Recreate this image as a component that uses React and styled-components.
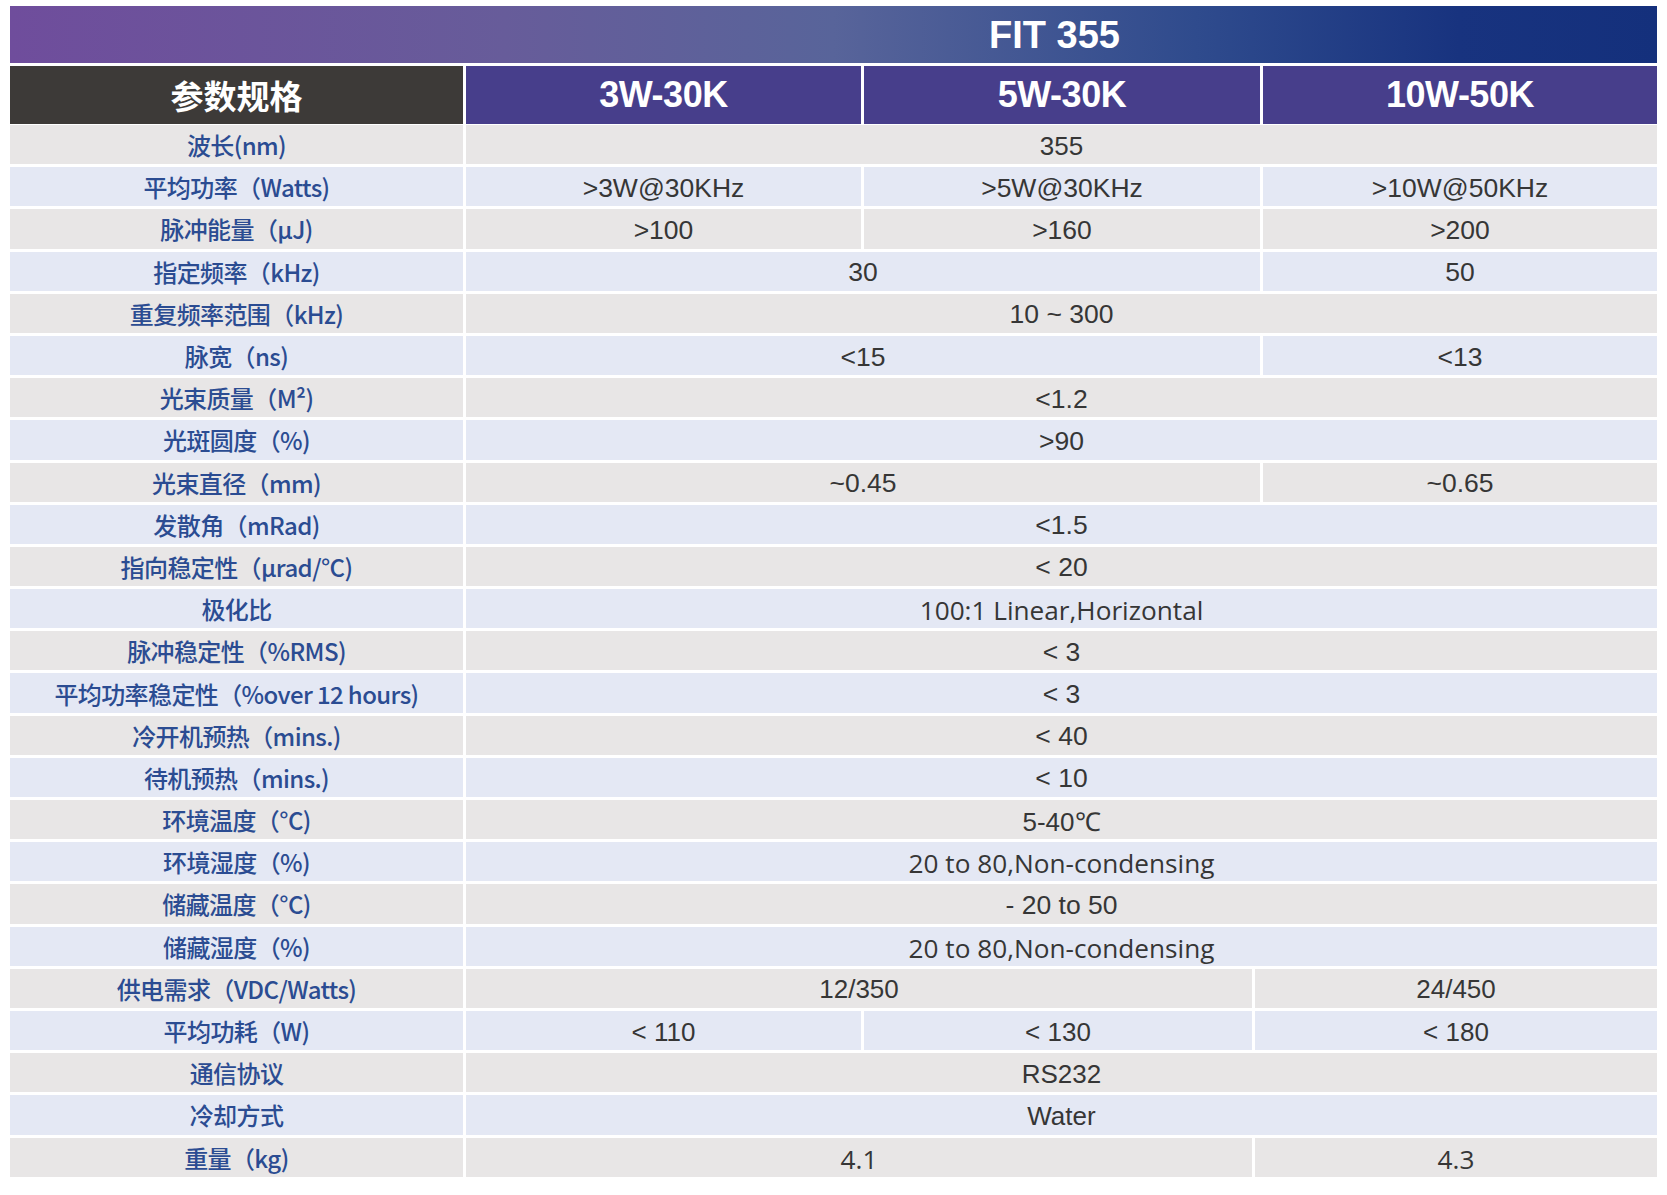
import React from 'react'
import styled, { createGlobalStyle, css } from 'styled-components'

const GlobalStyle = createGlobalStyle`
    html, body {
        margin: 0;
        padding: 0;
        background: #ffffff;
    }
`

const COLS = '453px 395px 396px 394px'
const COLS_SHIFTED = '453px 395px 388px 402px'

const fonts = {
    arial: css`
        font-family: "Liberation Sans", Arial, sans-serif;
        font-size: 26.5px;
    `,
    narrow: css`
        font-family: "Liberation Sans Narrow", "Liberation Sans", Arial, sans-serif;
        font-size: 26px;
    `,
    open: css`
        font-family: "Open Sans", "Noto Sans", sans-serif;
        font-size: 26.2px;
    `,
}

const Page = styled.div`
    padding: 6px 10px 16px 10px;
`

const Table = styled.div`
    width: 1647px;
    display: flex;
    flex-direction: column;
    gap: 3px;
`

const TitleBar = styled.div`
    height: 57px;
    display: grid;
    grid-template-columns: ${COLS};
    column-gap: 3px;
    background: linear-gradient(90deg, #6f4d9c 0%, #675c9a 30%, #58649a 50%, #2f4b8d 72%, #18337f 88%, #14307c 100%);
`

const Title = styled.div`
    grid-column: 2 / -1;
    display: flex;
    align-items: center;
    justify-content: center;
    padding-right: 14px;
    padding-top: 2px;
    color: #ffffff;
    font-family: "Liberation Sans Narrow", "Liberation Sans", Arial, sans-serif;
    font-weight: 700;
    font-size: 38px;
`

const HeaderRow = styled.div`
    display: grid;
    grid-template-columns: ${COLS};
    column-gap: 3px;
    height: 58px;
    margin-bottom: -2px;
`

const HeadCell = styled.div`
    display: flex;
    align-items: center;
    justify-content: center;
    color: #ffffff;
    font-weight: 700;
    background: ${p => (p.$dark ? '#3d3a38' : '#473e8b')};
    font-family: ${p => (p.$dark
        ? '"Noto Sans CJK SC", sans-serif'
        : '"Liberation Sans Narrow", "Liberation Sans", Arial, sans-serif')};
    font-size: ${p => (p.$dark ? '33px' : '36px')};
    letter-spacing: ${p => (p.$dark ? '0' : '-0.5px')};
`

const Row = styled.div`
    display: grid;
    grid-template-columns: ${p => (p.$shifted ? COLS_SHIFTED : COLS)};
    column-gap: 3px;
    height: 39.2px;
`

const Cell = styled.div`
    display: flex;
    align-items: center;
    justify-content: center;
    background: ${p => (p.$alt ? '#e4e8f4' : '#e8e6e6')};
    white-space: nowrap;
`

const Label = styled(Cell)`
    color: #2b4c92;
    font-family: "Noto Sans CJK SC", "Open Sans", sans-serif;
    font-size: 24px;
    font-weight: 500;
    letter-spacing: -0.6px;
`

const Value = styled(Cell)`
    grid-column: span ${p => p.$span || 1};
    color: #363636;
    padding-top: 3px;
    ${p => fonts[p.$font || 'arial']}
`

const rows = [
    { label: '波长(nm)', values: [['355', 3, 'narrow']] },
    { label: '平均功率（Watts)', values: [['>3W@30KHz'], ['>5W@30KHz'], ['>10W@50KHz']] },
    { label: '脉冲能量（μJ)', values: [['>100'], ['>160'], ['>200']] },
    { label: '指定频率（kHz)', values: [['30', 2], ['50']] },
    { label: '重复频率范围（kHz)', values: [['10 ~ 300', 3]] },
    { label: '脉宽（ns)', values: [['<15', 2], ['<13']] },
    { label: '光束质量（M²)', values: [['<1.2', 3]] },
    { label: '光斑圆度（%)', values: [['>90', 3]] },
    { label: '光束直径（mm)', values: [['~0.45', 2], ['~0.65']] },
    { label: '发散角（mRad)', values: [['<1.5', 3]] },
    { label: '指向稳定性（μrad/°C)', values: [['< 20', 3]] },
    { label: '极化比', values: [['100:1 Linear,Horizontal', 3, 'open']] },
    { label: '脉冲稳定性（%RMS)', values: [['< 3', 3]] },
    { label: '平均功率稳定性（%over 12 hours)', values: [['< 3', 3]] },
    { label: '冷开机预热（mins.)', values: [['< 40', 3]] },
    { label: '待机预热（mins.)', values: [['< 10', 3]] },
    { label: '环境温度（°C)', values: [['5-40℃', 3, 'narrow']] },
    { label: '环境湿度（%)', values: [['20 to 80,Non-condensing', 3, 'open']] },
    { label: '储藏温度（°C)', values: [['- 20 to 50', 3]] },
    { label: '储藏湿度（%)', values: [['20 to 80,Non-condensing', 3, 'open']] },
    { label: '供电需求（VDC/Watts)', shifted: true, values: [['12/350', 2, 'narrow'], ['24/450', 1, 'narrow']] },
    { label: '平均功耗（W)', shifted: true, values: [['< 110', 1, 'narrow'], ['< 130', 1, 'narrow'], ['< 180', 1, 'narrow']] },
    { label: '通信协议', values: [['RS232', 3, 'narrow']] },
    { label: '冷却方式', values: [['Water', 3, 'narrow']] },
    { label: '重量（kg)', shifted: true, values: [['4.1', 2, 'open'], ['4.3', 1, 'open']] },
]

const models = ['3W-30K', '5W-30K', '10W-50K']

const App = () => {
    return (
        <Page>
            <GlobalStyle />
            <Table>
                <TitleBar>
                    <Title>FIT 355</Title>
                </TitleBar>
                <HeaderRow>
                    <HeadCell $dark>参数规格</HeadCell>
                    {models.map(m => <HeadCell key={m}>{m}</HeadCell>)}
                </HeaderRow>
                {rows.map((row, i) => (
                    <Row key={row.label} $shifted={row.shifted}>
                        <Label $alt={i % 2 === 1}>{row.label}</Label>
                        {row.values.map(([text, span, font], j) => (
                            <Value key={j} $alt={i % 2 === 1} $span={span} $font={font}>
                                {text}
                            </Value>
                        ))}
                    </Row>
                ))}
            </Table>
        </Page>
    )
}

export default App
